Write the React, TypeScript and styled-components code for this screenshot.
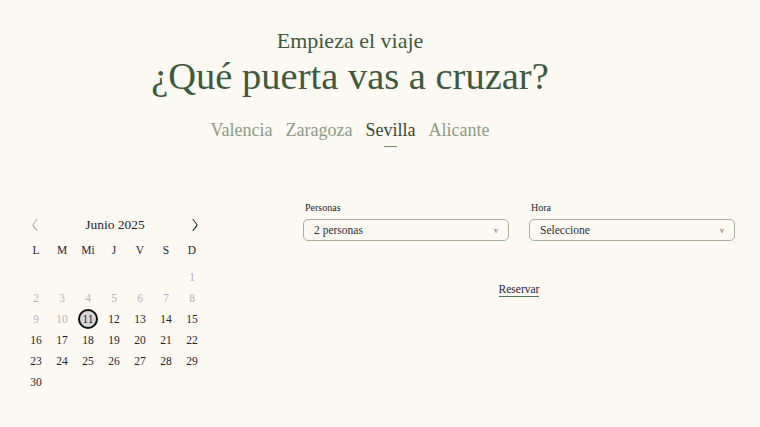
import React, { useState } from "react";
import styled, { createGlobalStyle } from "styled-components";

const GlobalStyle = createGlobalStyle`
  body {
    margin: 0;
    background: #fcf8f2;
    font-family: "Liberation Serif", "DejaVu Serif", serif;
    color: #1e2530;
  }
`;

const cities = ["Valencia", "Zaragoza", "Sevilla", "Alicante"];
const weekDays = ["L", "M", "Mi", "J", "V", "S", "D"];

const Chevron = ({ dir, color }: { dir: "left" | "right"; color: string }) => (
  <svg width="6" height="12" viewBox="0 0 6 12">
    <path
      d={dir === "left" ? "M5 0.5 Q1.5 4.5 1 6 Q1.5 7.5 5 11.5" : "M1 0.5 Q4.5 4.5 5 6 Q4.5 7.5 1 11.5"}
      fill="none"
      stroke={color}
      strokeWidth="1.1"
      strokeLinecap="round"
    />
  </svg>
);

const App = () => {
  const [city, setCity] = useState("Sevilla");
  const selected = 11;
  // June 2025 starts on Sunday
  const offset = 6;
  const cells: (number | null)[] = [
    ...Array(offset).fill(null),
    ...Array.from({ length: 30 }, (_, i) => i + 1),
  ];

  return (
    <Page>
      <GlobalStyle />
      <Hero>
        <Kicker>Empieza el viaje</Kicker>
        <Title>¿Qué puerta vas a cruzar?</Title>
        <Tabs>
          {cities.map((c) => (
            <Tab key={c} $active={c === city} onClick={() => setCity(c)}>
              {c}
            </Tab>
          ))}
        </Tabs>
      </Hero>

      <Booking>
        <Calendar>
          <CalHeader>
            <NavButton>
              <Chevron dir="left" color="#a9a9a9" />
            </NavButton>
            <Month>Junio 2025</Month>
            <NavButton>
              <Chevron dir="right" color="#1e2530" />
            </NavButton>
          </CalHeader>
          <Grid>
            {weekDays.map((d) => (
              <WeekDay key={d}>{d}</WeekDay>
            ))}
            {cells.map((n, i) => (
              <Day
                key={i}
                $disabled={n !== null && n < selected}
                $selected={n === selected}
              >
                {n ?? ""}
              </Day>
            ))}
          </Grid>
        </Calendar>

        <FormArea>
          <Fields>
            <Field>
              <Label>Personas</Label>
              <Select>
                <span>2 personas</span>
                <Caret>v</Caret>
              </Select>
            </Field>
            <Field>
              <Label>Hora</Label>
              <Select>
                <span>Seleccione</span>
                <Caret>v</Caret>
              </Select>
            </Field>
          </Fields>
          <Reserve>Reservar</Reserve>
        </FormArea>
      </Booking>
    </Page>
  );
};

export default App;

const Page = styled.div`
  width: 760px;
  height: 427px;
  overflow: hidden;
`;

const Hero = styled.header`
  width: 700px;
  display: flex;
  flex-direction: column;
  align-items: center;
  padding-top: 28px;
`;

const Kicker = styled.div`
  font-size: 22px;
  line-height: 26px;
  color: #3d5a3e;
`;

const Title = styled.h1`
  margin: 0;
  font-size: 38.5px;
  line-height: 44px;
  font-weight: 400;
  color: #3d5a3e;
`;

const Tabs = styled.nav`
  display: flex;
  gap: 13px;
  margin-top: 21px;
`;

const Tab = styled.button<{ $active?: boolean }>`
  position: relative;
  background: none;
  border: none;
  padding: 0 0 6px;
  font-family: inherit;
  font-size: 18px;
  line-height: 22px;
  color: ${(p) => (p.$active ? "#334a35" : "#8c9c88")};
  cursor: pointer;

  &::after {
    content: "";
    display: ${(p) => (p.$active ? "block" : "none")};
    position: absolute;
    left: 50%;
    bottom: 0;
    width: 13px;
    height: 1px;
    margin-left: -6px;
    background: #6f8a6e;
  }
`;

const Booking = styled.section`
  display: flex;
  align-items: flex-start;
  margin-top: 55px;
  padding-left: 23px;
`;

const Calendar = styled.div`
  width: 182px;
  margin-top: 12px;
`;

const CalHeader = styled.div`
  display: flex;
  align-items: center;
  justify-content: space-between;
  height: 22px;
  padding: 0 7px 0 9px;
`;

const NavButton = styled.span`
  display: flex;
  align-items: center;
`;

const Month = styled.div`
  font-size: 13.5px;
  color: #1e2530;
`;

const Grid = styled.div`
  display: grid;
  grid-template-columns: repeat(7, 26px);
  grid-template-rows: 27px;
  grid-auto-rows: 21px;
  margin-top: 3.5px;
`;

const WeekDay = styled.div`
  display: flex;
  align-items: center;
  justify-content: center;
  height: 21px;
  font-size: 11.5px;
  color: #1e2530;
`;

const Day = styled.div<{ $disabled?: boolean; $selected?: boolean }>`
  display: flex;
  align-items: center;
  justify-content: center;
  font-size: 11.5px;
  color: ${(p) => (p.$disabled ? "#b3b3b3" : "#1e2530")};

  ${(p) =>
    p.$selected &&
    `
    box-sizing: border-box;
    width: 20px;
    height: 20px;
    justify-self: center;
    align-self: center;
    border-radius: 50%;
    border: 2px solid #111;
    background: #d6d6d6;
  `}
`;

const FormArea = styled.div`
  margin-left: 98px;
  width: 432px;
  display: flex;
  flex-direction: column;
  align-items: center;
`;

const Fields = styled.div`
  width: 100%;
  display: flex;
  gap: 20px;
`;

const Field = styled.div`
  flex: 1;
  display: flex;
  flex-direction: column;
`;

const Label = styled.div`
  font-size: 10px;
  line-height: 12px;
  padding-left: 2px;
  margin-bottom: 5px;
  color: #1e2530;
`;

const Select = styled.div`
  height: 20px;
  border: 1px solid #a7af9e;
  border-radius: 5px;
  display: flex;
  align-items: center;
  justify-content: space-between;
  padding: 0 10px 0 10px;
  font-size: 11.5px;
  color: #2b3138;
`;

const Caret = styled.span`
  font-size: 8px;
  color: #5a5f66;
`;

const Reserve = styled.button`
  margin-top: 42px;
  background: none;
  border: none;
  border-bottom: 1px solid #4f7551;
  padding: 0 0 1px;
  font-family: inherit;
  font-size: 11.5px;
  color: #1e2530;
  cursor: pointer;
`;
